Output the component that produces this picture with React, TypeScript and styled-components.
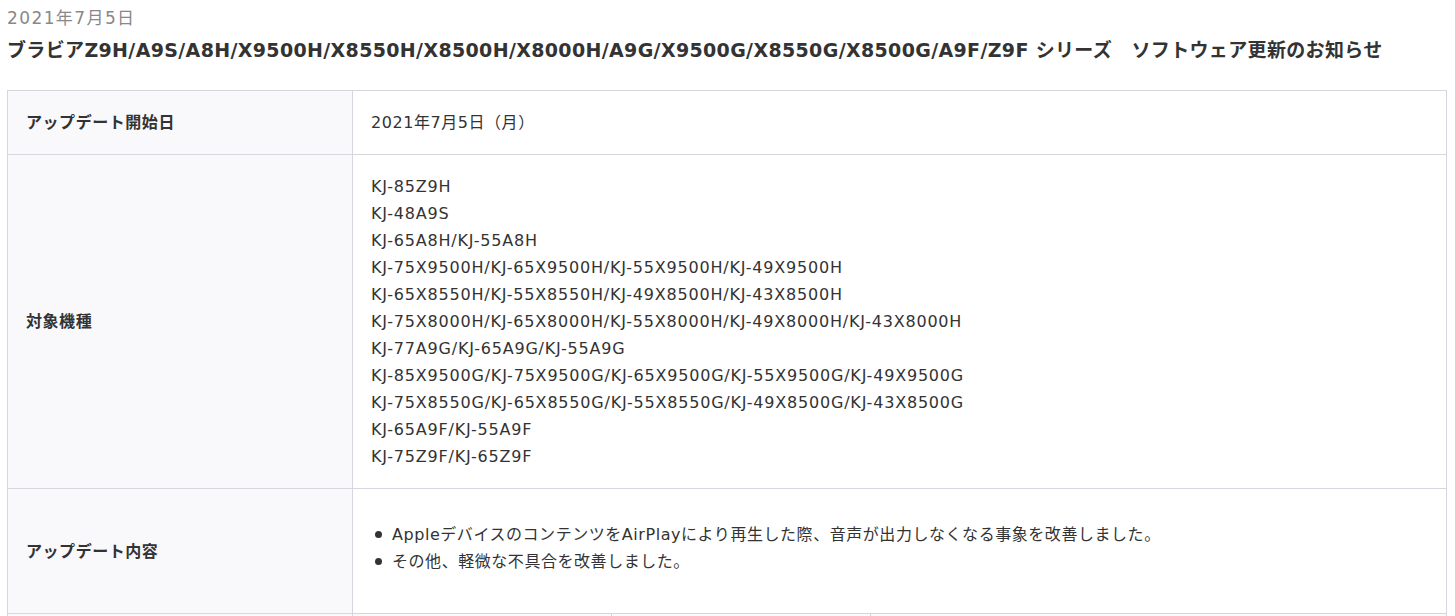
import styled, { createGlobalStyle } from "styled-components";

const models = [
  "KJ-85Z9H",
  "KJ-48A9S",
  "KJ-65A8H/KJ-55A8H",
  "KJ-75X9500H/KJ-65X9500H/KJ-55X9500H/KJ-49X9500H",
  "KJ-65X8550H/KJ-55X8550H/KJ-49X8500H/KJ-43X8500H",
  "KJ-75X8000H/KJ-65X8000H/KJ-55X8000H/KJ-49X8000H/KJ-43X8000H",
  "KJ-77A9G/KJ-65A9G/KJ-55A9G",
  "KJ-85X9500G/KJ-75X9500G/KJ-65X9500G/KJ-55X9500G/KJ-49X9500G",
  "KJ-75X8550G/KJ-65X8550G/KJ-55X8550G/KJ-49X8500G/KJ-43X8500G",
  "KJ-65A9F/KJ-55A9F",
  "KJ-75Z9F/KJ-65Z9F",
];

const changes = [
  "AppleデバイスのコンテンツをAirPlayにより再生した際、音声が出力しなくなる事象を改善しました。",
  "その他、軽微な不具合を改善しました。",
];

const GlobalStyle = createGlobalStyle`
  body {
    margin: 0;
    background: #fff;
    color: #333;
    font-family: "DejaVu Sans", "Noto Sans CJK JP", sans-serif;
  }
`;

const Page = styled.div`
  padding: 6px 7px 0 7px;
  width: 1440px;
`;

const DateLabel = styled.div`
  font-size: 17px;
  line-height: 24px;
  letter-spacing: 1.4px;
  color: #888;
`;

const Title = styled.h2`
  margin: 4px 0 0 0;
  font-size: 19px;
  line-height: 32px;
  letter-spacing: 0.35px;
  font-weight: bold;
  color: #333;
  white-space: nowrap;
`;

const SpecTable = styled.table`
  margin-top: 24px;
  width: 1440px;
  border-collapse: collapse;
  table-layout: fixed;
  font-size: 16px;
  line-height: 27px;
  letter-spacing: 0.55px;
`;

const HeadCell = styled.th`
  width: 345px;
  padding: 18px 18px;
  background: #f9f9fb;
  border: 1px solid #d6d6de;
  text-align: left;
  font-weight: bold;
  color: #333;
  vertical-align: middle;
`;

const Cell = styled.td<{ $tint?: boolean }>`
  padding: 18px 18px;
  border: 1px solid #d6d6de;
  background: ${(p) => (p.$tint ? "#f9f9fb" : "#fff")};
  color: #333;
  vertical-align: middle;
`;

const ListCell = styled(Cell)`
  padding-top: 32px;
  padding-bottom: 38px;
`;

const ModelLine = styled.div`
  white-space: nowrap;
  letter-spacing: 0.8px;
`;

const BulletList = styled.ul`
  margin: 0;
  padding: 0;
  list-style: none;
`;

const BulletItem = styled.li`
  display: flex;
  align-items: center;
  &::before {
    content: "";
    width: 7px;
    height: 7px;
    border-radius: 50%;
    background: #333;
    margin: 0 10px 0 4px;
    flex-shrink: 0;
  }
`;

export default function App() {
  return (
    <>
      <GlobalStyle />
      <Page>
        <DateLabel>2021年7月5日</DateLabel>
        <Title>
          ブラビアZ9H/A9S/A8H/X9500H/X8550H/X8500H/X8000H/A9G/X9500G/X8550G/X8500G/A9F/Z9F シリーズ　ソフトウェア更新のお知らせ
        </Title>
        <SpecTable>
          <colgroup>
            <col style={{ width: 345 }} />
            <col style={{ width: 259 }} />
            <col style={{ width: 259 }} />
            <col />
          </colgroup>
          <tbody>
            <tr>
              <HeadCell>アップデート開始日</HeadCell>
              <Cell colSpan={3}>2021年7月5日（月）</Cell>
            </tr>
            <tr>
              <HeadCell>対象機種</HeadCell>
              <Cell colSpan={3}>
                {models.map((m) => (
                  <ModelLine key={m}>{m}</ModelLine>
                ))}
              </Cell>
            </tr>
            <tr>
              <HeadCell>アップデート内容</HeadCell>
              <ListCell colSpan={3}>
                <BulletList>
                  {changes.map((c) => (
                    <BulletItem key={c}>{c}</BulletItem>
                  ))}
                </BulletList>
              </ListCell>
            </tr>
            <tr>
              <HeadCell>ソフトウェアバージョン</HeadCell>
              <Cell $tint>更新前</Cell>
              <Cell $tint>更新後</Cell>
              <Cell $tint>備考</Cell>
            </tr>
          </tbody>
        </SpecTable>
      </Page>
    </>
  );
}
